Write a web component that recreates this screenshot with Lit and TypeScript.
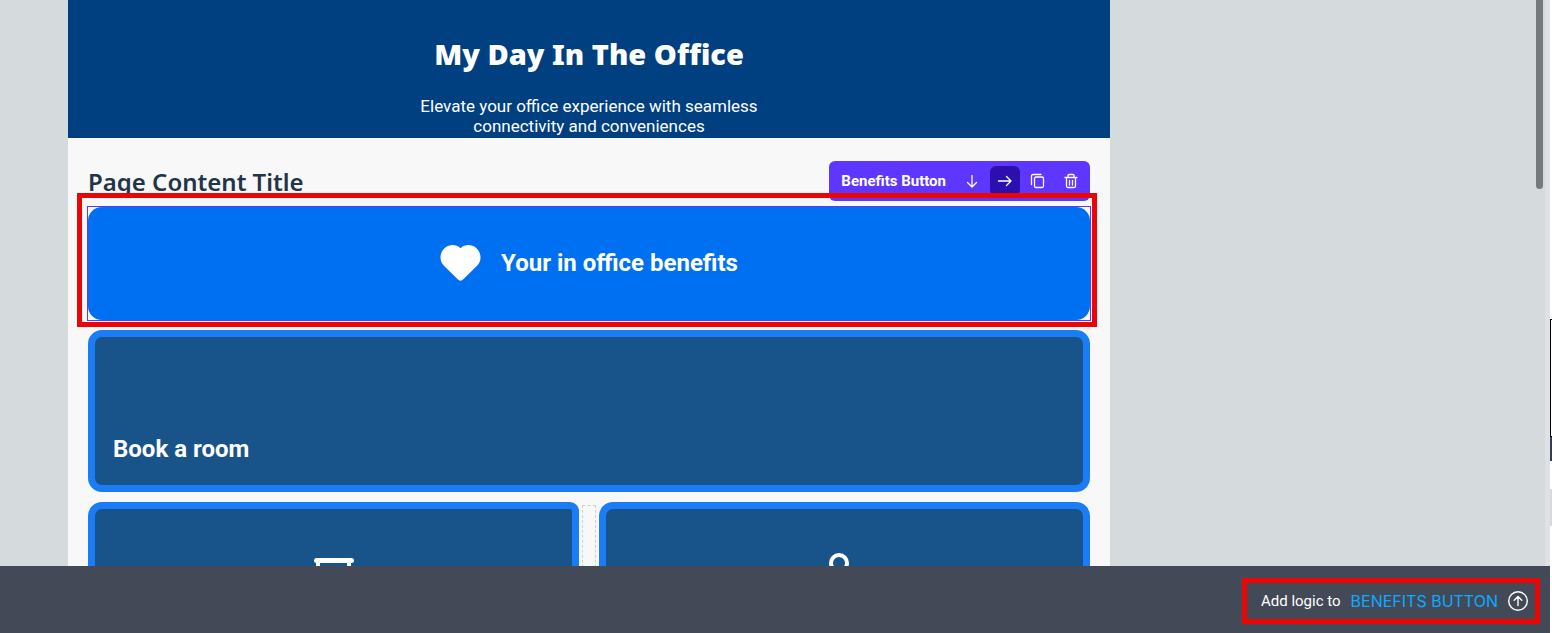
import { LitElement, html, css, svg } from "lit";
import { customElement } from "lit/decorators.js";

const arrowDown = svg`<path d="M8 2.500v11M3.500 9.500 8 14l4.500-4.500" />`;
const arrowRight = svg`<path d="M1.500 8h12.500M9.500 3.500 14 8l-4.500 4.500" />`;
const copy = svg`<path d="M6 4h6a1.500 1.500 0 0 1 1.500 1.500v7.500a1.500 1.500 0 0 1-1.500 1.500H6A1.500 1.500 0 0 1 4.500 13V5.500A1.500 1.500 0 0 1 6 4zM1.500 11.500V3A1.500 1.500 0 0 1 3 1.500h8" />`;
const trash = svg`<path d="M2 4.500h12M5 4.500v-2a1 1 0 0 1 1-1h4a1 1 0 0 1 1 1v2M3.500 4.500v8.500a1.500 1.500 0 0 0 1.500 1.500h6a1.500 1.500 0 0 0 1.500-1.500V4.500M6.500 7.500v4.500M9.500 7.500v4.500" />`;

const tools = [
  { label: "Move down", icon: arrowDown, active: false },
  { label: "Move right", icon: arrowRight, active: true },
  { label: "Duplicate", icon: copy, active: false },
  { label: "Delete", icon: trash, active: false },
];

@customElement("app-root")
export class AppRoot extends LitElement {
  static styles = css`
    :host {
      display: grid;
      grid-template-columns: 1fr 2px;
      height: 100vh;
      overflow: hidden;
      font-family: Roboto, "Liberation Sans", sans-serif;
      color: #fff;
    }
    * { box-sizing: border-box; }
    h1, h2, p { margin: 0; }
    button { font: inherit; color: inherit; border: 0; cursor: pointer; }
    h1, h2 { font-family: "Noto Sans", "Open Sans", sans-serif; }
    .logic a { font-family: Inter, sans-serif; }
    .editor { display: grid; grid-template-rows: minmax(0, 1fr) auto; min-width: 0; min-height: 0; }
    .canvas {
      position: relative;
      overflow: hidden;
      background: #d5dadd;
      border-right: 5px solid #dfe1e7;
    }
    .thumb {
      position: absolute;
      top: -10px;
      right: 2px;
      width: 7px;
      height: 199px;
      border-radius: 4px;
      background: #75797c;
    }
    .page { margin-left: 68px; margin-right: 435px; background: #f8f8f8; }
    .hero {
      height: 138px;
      padding-top: 36px;
      text-align: center;
      background: #004080;
    }
    .hero h1 { font-size: 29px; line-height: 36px; font-weight: 900; }
    .hero p { width: 360px; margin: 24px auto 0; font-size: 17px; line-height: 20px; }
    .body { display: grid; gap: 10px; padding: 23px 20px; }
    .head { display: flex; justify-content: space-between; align-items: center; height: 40px; margin-bottom: -4px; }
    .head h2 { padding-top: 2px; font-size: 24px; line-height: 30px; font-weight: 600; color: #223548; }
    .toolbar {
      display: flex;
      align-items: center;
      height: 40px;
      padding: 5px 4px;
      gap: 3px;
      border-radius: 6px;
      background: #5d36ff;
    }
    .toolbar span { padding: 0 8px; font-size: 15px; font-weight: 700; }
    .tool { display: grid; place-items: center; width: 30px; height: 30px; padding: 0; border-radius: 6px; background: none; }
    .tool.active { background: #2b10ad; }
    svg { fill: none; stroke: currentColor; stroke-linecap: round; stroke-linejoin: round; display: block; }
    .tool svg { width: 16px; height: 16px; stroke-width: 1.3; }
    .selected { position: relative; }
    .outline { position: absolute; inset: -1px; border: 1px solid #5d36ff; pointer-events: none; }
    .mark { position: absolute; inset: -14px -7px -7px -11px; border: 5px solid #ec0505; pointer-events: none; }
    .benefits {
      display: flex;
      align-items: center;
      justify-content: center;
      gap: 20px;
      width: 100%;
      height: 113px;
      padding-bottom: 2px;
      border-radius: 14px;
      background: #0070f2;
      font-size: 24px;
      font-weight: 700;
    }
    .benefits svg { width: 41px; height: 36px; fill: #fff; stroke: none; }
    .card {
      display: flex;
      border: 7px solid #1a7df5;
      border-radius: 14px;
      background: #18538a;
      padding: 18px;
    }
    .room { height: 162px; width: 100%; align-items: flex-end; text-align: left; font-size: 24px; line-height: 36px; font-weight: 700; }
    .pair { display: grid; grid-template-columns: 1fr 14px 1fr; column-gap: 3px; height: 160px; }
    .pair .card { justify-content: center; padding: 44px 18px; }
    .pair .first { border-top-right-radius: 9px; }
    .slot { margin-top: 3px; border: 1px dashed #cfcfcf; }
    .pair svg { width: 42px; height: 42px; stroke: #fff; stroke-width: 4; }
    .footer {
      display: flex;
      justify-content: flex-end;
      align-items: center;
      height: 67px;
      padding: 3px 10px 0 0;
      background: #434957;
    }
    .logic {
      display: flex;
      align-items: center;
      gap: 10px;
      height: 46px;
      padding: 0 7px 0 14px;
      border: 5px solid #ec0505;
      font-size: 15px;
    }
    .logic a { color: #0aacff; font-size: 16px; text-decoration: none; }
    .logic button { padding: 0; background: none; }
    .logic svg { width: 20px; height: 20px; stroke-width: 1.4; }
    .rail { display: grid; grid-template-rows: 319fr 118fr 24fr 28fr 37fr 107fr; background: #fff; }
    .panel { border: 1px solid #000; border-right: 0; }
    .dark { background: #343c4e; }
    .muted { background: #d9d9d9; }
  `;

  render() {
    return html`
      <main class="editor">
        <section class="canvas">
          <div class="page">
            <header class="hero">
              <h1>My Day In The Office</h1>
              <p>Elevate your office experience with seamless connectivity and conveniences</p>
            </header>
            <div class="body">
              <div class="head">
                <h2>Page Content Title</h2>
                <div class="toolbar">
                  <span>Benefits Button</span>
                  ${tools.map(
                    (t) => html`<button class="tool ${t.active ? "active" : ""}" aria-label=${t.label}>
                      <svg viewBox="0 0 16 16">${t.icon}</svg>
                    </button>`
                  )}
                </div>
              </div>
              <div class="selected">
                <button class="benefits">
                  <svg viewBox="0 0 41 36">
                    <path d="M20.500 3.200C24.500-.8 31.500-1 36 2.800c5.500 4.700 6 12.700 1.300 17.700L23.300 34.300a4 4 0 0 1-5.600 0L3.700 20.500C-1 15.500-.5 7.500 5 2.800 9.500-1 16.500-.8 20.500 3.200z" />
                  </svg>
                  Your in office benefits
                </button>
                <div class="outline"></div>
                <div class="mark"></div>
              </div>
              <button class="card room">Book a room</button>
              <div class="pair">
                <button class="card first" aria-label="Desk">
                  <svg viewBox="0 0 42 42"><path d="M3.500 7.500h35" stroke-width="5" /><path d="M5 8v30M36 8v30" /></svg>
                </button>
                <div class="slot"></div>
                <button class="card" aria-label="Person">
                  <svg viewBox="0 0 42 42"><circle cx="15" cy="10" r="8" /><path d="M3 38c0-8 6-13 12-13s12 5 12 13" /></svg>
                </button>
              </div>
            </div>
          </div>
          <div class="thumb"></div>
        </section>
        <footer class="footer">
          <div class="logic">
            <span>Add logic to</span>
            <a href="#">BENEFITS BUTTON</a>
            <button aria-label="Open logic editor">
              <svg viewBox="0 0 20 20"><circle cx="10" cy="10" r="9.300" /><path d="M10 14.500V6M6.200 9.200 10 5.500l3.800 3.700" /></svg>
            </button>
          </div>
        </footer>
      </main>
      <aside class="rail">
        <div></div>
        <div class="panel"></div>
        <div class="dark"></div>
        <div></div>
        <div class="muted"></div>
        <div></div>
      </aside>
    `;
  }
}
